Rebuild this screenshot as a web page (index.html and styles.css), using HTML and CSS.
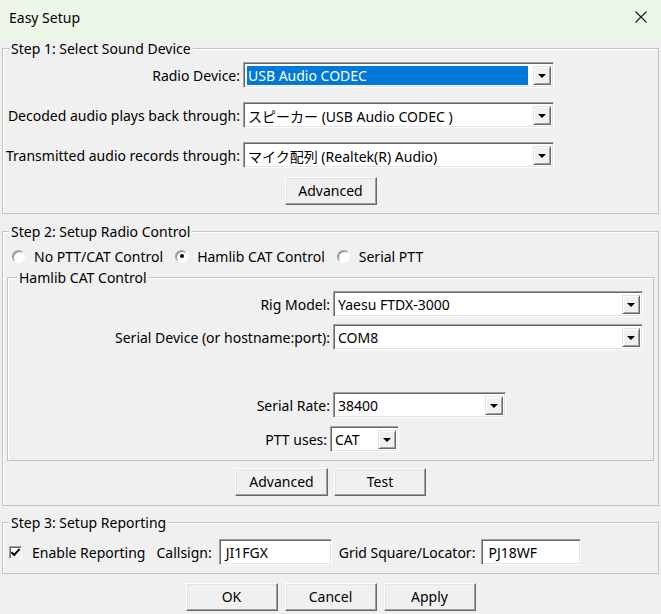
FILE: index.html
```html
<!DOCTYPE html>
<html>
<head>
<meta charset="utf-8">
<link rel="stylesheet" href="styles.css">
</head>
<body>
<div class="titlebar">
  <span class="title">Easy Setup</span>
  <svg class="close" width="14" height="14" viewBox="0 0 14 14"><path d="M1.5 1.5 L12.5 12.5 M12.5 1.5 L1.5 12.5" stroke="#1a1a1a" stroke-width="1.1" fill="none"/></svg>
</div>
<div class="window">
  <fieldset class="group step1">
    <legend>Step 1: Select Sound Device</legend>
    <div class="form1">
      <label class="lbl">Radio Device:</label>
      <div class="combo"><span class="val sel">USB Audio CODEC</span><span class="arrow"><i></i></span></div>
      <label class="lbl">Decoded audio plays back through:</label>
      <div class="combo"><span class="val">スピーカー (USB Audio CODEC )</span><span class="arrow"><i></i></span></div>
      <label class="lbl">Transmitted audio records through:</label>
      <div class="combo"><span class="val">マイク配列 (Realtek(R) Audio)</span><span class="arrow"><i></i></span></div>
    </div>
    <div class="btnrow b1"><button class="btn">Advanced</button></div>
  </fieldset>

  <fieldset class="group step2">
    <legend>Step 2: Setup Radio Control</legend>
    <div class="radios">
      <span class="radio"></span><span class="rtext">No PTT/CAT Control</span>
      <span class="radio on"></span><span class="rtext">Hamlib CAT Control</span>
      <span class="radio"></span><span class="rtext">Serial PTT</span>
    </div>
    <fieldset class="group inner">
      <legend>Hamlib CAT Control</legend>
      <div class="row r-rig">
        <label class="lbl wide">Rig Model:</label>
        <div class="combo c309"><span class="val">Yaesu FTDX-3000</span><span class="arrow"><i></i></span></div>
      </div>
      <div class="row r-dev">
        <label class="lbl wide">Serial Device (or hostname:port):</label>
        <div class="combo c309"><span class="val">COM8</span><span class="arrow"><i></i></span></div>
      </div>
      <div class="row r-rate">
        <label class="lbl wide">Serial Rate:</label>
        <div class="combo c172"><span class="val">38400</span><span class="arrow"><i></i></span></div>
      </div>
      <div class="row r-ptt">
        <label class="lbl ptt">PTT uses:</label>
        <div class="combo c68"><span class="val">CAT</span><span class="arrow"><i></i></span></div>
      </div>
    </fieldset>
    <div class="btnrow b2"><button class="btn w93">Advanced</button><button class="btn">Test</button></div>
  </fieldset>

  <fieldset class="group step3">
    <legend>Step 3: Setup Reporting</legend>
    <div class="report">
      <span class="check"><svg width="11" height="11" viewBox="0 0 11 11"><path d="M1.5 5.2 L4.2 8 L9.5 2.2" stroke="#000" stroke-width="2" fill="none"/></svg></span>
      <span class="ctext">Enable Reporting</span>
      <span class="rlabel call">Callsign:</span>
      <span class="entry e112">JI1FGX</span>
      <span class="rlabel grid">Grid Square/Locator:</span>
      <span class="entry e100">PJ18WF</span>
    </div>
  </fieldset>

  <div class="btnrow b3"><button class="btn">OK</button><button class="btn">Cancel</button><button class="btn">Apply</button></div>
</div>
</body>
</html>
```
FILE: styles.css
```css
* { box-sizing: border-box; }
html, body { margin: 0; padding: 0; }
body {
  width: 661px;
  height: 614px;
  overflow: hidden;
  background: #f0f0f0;
  font-family: "Noto Sans", "Noto Sans CJK JP", sans-serif;
  font-size: 14px;
  color: #000;
}
.titlebar {
  height: 40px;
  background: #edf7e8;
  display: flex;
  align-items: center;
  justify-content: space-between;
  padding: 0 13px 6px 9px;
}
.title { font-size: 14px; }
.close { display: block; }

.window { padding: 0 2px; }

.group {
  margin: 0;
  padding: 0;
  border: 1px solid #c3c3c3;
  box-shadow: inset 1px 1px 0 #ffffff;
  min-width: 0;
}
.group legend {
  padding: 0 2px;
  margin-left: 6px;
  line-height: 17px;
  background: #f0f0f0;
}
.group.inner { margin: 4px 4px 0; }
.group.inner legend { margin-left: 9px; }

.step1 { padding-bottom: 8px; }
.form1 {
  display: grid;
  grid-template-columns: 237px 311px;
  column-gap: 3px;
  row-gap: 14px;
  align-items: center;
  margin-top: 5px;
}
.lbl { text-align: right; white-space: nowrap; }

.combo {
  display: flex;
  align-items: stretch;
  height: 26px;
  border: 1px solid;
  border-color: #a0a0a0 #ffffff #ffffff #a0a0a0;
  box-shadow: inset 1px 1px 0 #696969, inset -1px -1px 0 #e3e3e3;
  background: #fff;
  padding: 3px 2px 2px 3px;
}
.val {
  flex: 1;
  display: flex;
  align-items: center;
  padding-left: 1px;
  white-space: nowrap;
  overflow: hidden;
  margin-right: 3px;
}
.val.sel { background: #0078d7; color: #fff; margin-right: 5px; }
.arrow {
  width: 18px;
  flex: none;
  background: #f0f0f0;
  border: 1px solid;
  border-color: #e3e3e3 #696969 #696969 #e3e3e3;
  box-shadow: inset 1px 1px 0 #fff, inset -1px -1px 0 #a0a0a0;
  display: flex;
  align-items: center;
  justify-content: center;
}
.arrow i {
  display: block;
  width: 0; height: 0;
  border-left: 4px solid transparent;
  border-right: 4px solid transparent;
  border-top: 4px solid #000;
  margin-top: 1px;
}

.btnrow { display: flex; justify-content: center; gap: 6px; }
.b1 { margin-top: 9px; }
.btn {
  width: 92px;
  height: 28px;
  font: inherit;
  color: #000;
  background: #f0f0f0;
  border: 1px solid;
  border-color: #ffffff #696969 #696969 #ffffff;
  box-shadow: inset -1px -1px 0 #a0a0a0, inset 1px 1px 0 #e3e3e3;
  padding: 0 0 1px;
}
.btn.w93 { width: 93px; }

.step2 { margin-top: 9px; padding-bottom: 9px; }
.radios {
  display: flex;
  align-items: center;
  height: 18px;
  margin-top: 7px;
  padding-left: 9px;
}
.radio {
  width: 13px; height: 13px;
  border-radius: 50%;
  border: 1px solid;
  border-color: #a0a0a0 #ffffff #ffffff #a0a0a0;
  box-shadow: inset 1px 1px 0 #8a8a8a;
  background: #fff;
  position: relative;
  margin-right: 9px;
  flex: none;
}
.radio.on::after {
  content: "";
  position: absolute;
  left: 3.5px; top: 3.5px;
  width: 4px; height: 4px;
  border-radius: 50%;
  background: #000;
}
.rtext { margin-right: 12px; white-space: nowrap; }

.row { display: flex; align-items: center; gap: 3px; }
.lbl.wide { width: 322px; }
.lbl.ptt { width: 319px; }
.c309 { width: 310px; }
.c172 { width: 173px; }
.c68 { width: 69px; }
.r-rig { margin-top: 5px; }
.r-dev { margin-top: 7px; }
.r-rate { margin-top: 42px; }
.r-ptt { margin-top: 8px; margin-bottom: 8px; }
.b2 { margin-top: 7px; }

.step3 { margin-top: 8px; padding-bottom: 8px; }
.report {
  display: flex;
  align-items: center;
  margin-top: 8px;
  padding-left: 6px;
}
.check {
  width: 13px; height: 13px;
  flex: none;
  border: 1px solid;
  border-color: #a0a0a0 #ffffff #ffffff #a0a0a0;
  box-shadow: inset 1px 1px 0 #696969, inset -1px -1px 0 #e3e3e3;
  background: #fff;
  display: flex;
  align-items: center;
  justify-content: center;
}
.check svg { display: block; }
.ctext { margin-left: 10px; white-space: nowrap; }
.rlabel { white-space: nowrap; }
.call { margin-left: 11px; }
.grid { margin-left: 7px; }
.entry {
  height: 26px;
  display: flex;
  align-items: center;
  padding-left: 6px;
  margin-left: 7px;
  border: 1px solid;
  border-color: #a0a0a0 #ffffff #ffffff #a0a0a0;
  box-shadow: inset 1px 1px 0 #696969, inset -1px -1px 0 #e3e3e3;
  background: #fff;
}
.e112 { width: 113px; }
.e100 { width: 100px; margin-left: 6px; }
.b3 { margin-top: 9px; gap: 7px; }
```
